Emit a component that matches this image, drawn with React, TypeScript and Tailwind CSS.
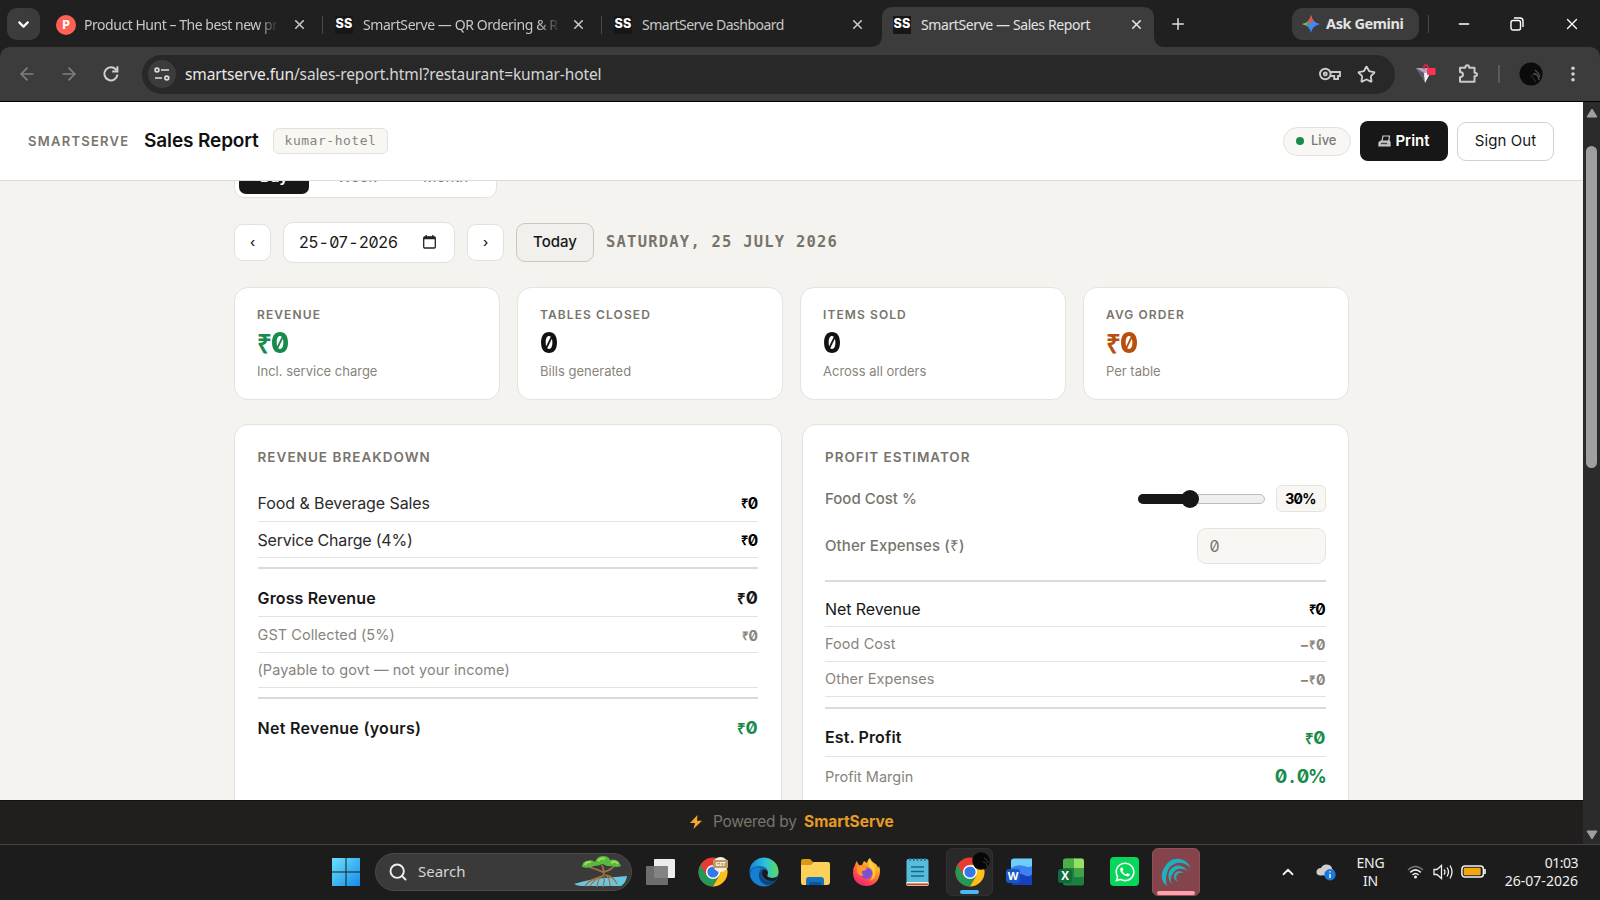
import { FC, ReactNode } from "react";
import { ArrowLeft, ArrowRight, ChevronDown, ChevronUp, Minus, Plus, Search, Star, X } from "lucide-react";
import { FaWhatsapp } from "react-icons/fa";

interface TabProps {
  title: string;
  icon: ReactNode;
  active?: boolean;
  divider?: boolean;
  className: string;
}

interface StatProps {
  label: string;
  sub: string;
  rupee?: boolean;
  color: string;
}

interface RowProps {
  label: string;
  value?: ReactNode;
  className: string;
  valueClass?: string;
  labelClass?: string;
}

const SSIcon = () => (
  <span className="flex h-[18px] w-[18px] shrink-0 items-center justify-center bg-[#171717] font-['Inter'] text-[12.5px] font-extrabold tracking-[0.2px] text-white">SS</span>
);

const Tab: FC<TabProps> = ({ title, icon, active, divider, className }) => (
  <div className={`relative flex h-[39px] w-[279px] shrink-0 items-center pb-[4px] pl-3 ${active ? "text-[#e3e3e3]" : "text-[#c7c7c7]"}`}>
    {active && (
      <svg className="absolute -left-[11px] top-0" width="294" height="40" viewBox="0 0 294 40" fill="#3c3c3c">
        <path d="M0 40C8 40 12 36 12 28V11C12 4 16 0 23 0H273C280 0 284 4 284 11V28C284 36 288 40 294 40Z" />
      </svg>
    )}
    <div className="relative flex w-[20px] items-center">{icon}</div>
    <div className={`relative ml-2 w-[200px] overflow-hidden whitespace-nowrap text-[14px] ${className}`}>{title}</div>
    <X className="relative ml-[8px] h-[15px] w-[15px] shrink-0" strokeWidth={2.6} />
    {divider && <div className="ml-[15px] h-[18px] w-px bg-[#484848]" />}
  </div>
);

// Slashed zero with an optional currency sign in front
const Amount: FC<{ minus?: boolean }> = ({ minus }) => (
  <span className="inline-flex items-center leading-none">
    {minus && <span className="font-bold">−</span>}
    <span className="-mr-[0.5px] font-['Open_Sans'] text-[0.83em] font-semibold">₹</span>
    <span className="font-bold">0</span>
  </span>
);

const StatCard: FC<StatProps> = ({ label, sub, rupee, color }) => (
  <div className="h-[113px] rounded-[14px] border border-[#e5e3dd] bg-white px-[22px] pt-[18px]">
    <div className="text-[12px] font-semibold leading-[18px] tracking-[1.1px] text-[#78746c]">{label}</div>
    <div className={`flex h-[37px] items-center text-[29px] font-extrabold leading-none ${color}`}>
      {rupee && <span className="-mr-px font-['Open_Sans'] text-[26px] font-bold">₹</span>}
      <span className="inline-block origin-left scale-x-90">0</span>
    </div>
    <div className="text-[13px] leading-[20px] text-[#88847c]">{sub}</div>
  </div>
);

const Row: FC<RowProps> = ({ label, value, className, valueClass = "text-[15px]", labelClass = "" }) => (
  <div className={`flex items-center justify-between border-[#e3e2dd] ${className}`}>
    <span className={labelClass}>{label}</span>
    <span className={valueClass}>{value}</span>
  </div>
);

const Chrome = () => (
  <svg width="30" height="30" viewBox="0 0 30 30">
    <circle cx="15" cy="15" r="14.5" fill="#e83b32" />
    <path d="M2.4 7.8A14.5 14.5 0 0 0 15 29.5L21.2 18.6 15 21.5 8.8 18.8Z" fill="#229954" />
    <path d="M15 29.5A14.5 14.5 0 0 0 27.6 7.8H15L21.5 18.4Z" fill="#fbc116" />
    <circle cx="15" cy="15" r="7.1" fill="#fff" />
    <circle cx="15" cy="15" r="5.6" fill="#3578e8" />
  </svg>
);

const Edge = () => (
  <svg width="30" height="30" viewBox="0 0 30 30">
    <defs>
      <linearGradient id="edgeTop" x1="0" x2="1"><stop stopColor="#1683d8" /><stop offset=".55" stopColor="#2cc4d8" /><stop offset="1" stopColor="#61d957" /></linearGradient>
    </defs>
    <circle cx="15" cy="15" r="14.5" fill="#1469b8" />
    <path d="M.6 14A14.5 14.5 0 0 1 29.5 14C30 20 25 22 20 20.5C17 19.6 18.5 18 19 16C19.5 11 14 8.5 9.5 9C5 9.4 2 11 .6 14Z" fill="url(#edgeTop)" />
    <path d="M10 16C9 22 13 27 19 28.5C13 31 4 27 1.5 20C1 12 7 9 11 11Z" fill="#1580d2" />
    <path d="M13.5 13C10.5 17 13 24 21 24C25 24 27 22 28.2 20.8C25 29 14 31 10.6 22C9 17 11 13 13.5 13Z" fill="#104584" />
    <path d="M13.6 13C17 11.4 20 14.6 18.5 17.5C17.3 19.5 20 21 23.5 21C26 21 28 20 28.5 19.5L27 23C20 26 10 21 13.6 13Z" fill="#1b1b1b" />
  </svg>
);

const Folder = () => (
  <svg width="30" height="28" viewBox="0 0 30 28">
    <path d="M1 3Q1 1 3 1H10L13 4H26V12H1Z" fill="#d99a13" />
    <path d="M1 7H11L14 4H28Q30 4 30 6V24Q30 27 27 27H3Q1 27 1 24Z" fill="#fcd15a" />
    <path d="M6 27V22Q6 19 9 19H21Q24 19 24 22V27Z" fill="#1273c4" />
    <path d="M9 24H21V27H9Z" fill="#0b5798" />
  </svg>
);

const Firefox = () => (
  <svg width="29" height="30" viewBox="0 0 29 30">
    <defs>
      <linearGradient id="fox" x1=".8" y1="0" x2=".2" y2="1"><stop stopColor="#ffe243" /><stop offset=".4" stopColor="#ff9226" /><stop offset=".7" stopColor="#ff4950" /><stop offset="1" stopColor="#e91d7c" /></linearGradient>
    </defs>
    <path d="M3 8L4.5 4L7 8L10 8L12 4L15 6Q15 3 18 1Q19 4 22 6Q25 7 26 11L27 9Q29 14 27 20C25 26 20 29 14.5 29C7 29 1 24 1 16Q1 11 3 8Z" fill="url(#fox)" />
    <circle cx="14.5" cy="16.2" r="5.7" fill="#7950d7" />
    <path d="M5 10Q9 9 12 10L15 11Q14 14 10 14Q9 17 12 18Q7 20 5 15Z" fill="#ff9a26" />
    <path d="M17 4Q21 6 23 12Q25 21 18 24Q25 14 17 10Z" fill="#ffd33b" />
  </svg>
);

const Notepad = () => (
  <svg width="23" height="30" viewBox="0 0 23 30">
    <rect x=".5" y="2" width="22" height="27" rx="2" fill="#58bddb" />
    <path d="M.5 25H22.5V27.5Q22.5 29 21 29H2Q.5 29 .5 27.5Z" fill="#f3f3f3" />
    <path d="M1 27.4H22" stroke="#c44c26" strokeWidth="2" />
    <path d="M4 1V4M7.8 1V4M11.5 1V4M15.2 1V4M19 1V4" stroke="#21708f" strokeWidth="1.5" />
    <path d="M5 10H18M5 14.5H18M5 19H18" stroke="#136988" strokeWidth="1.6" />
  </svg>
);

const Word = () => (
  <svg width="27" height="28" viewBox="0 0 27 28">
    <path d="M5 3Q5 .5 8 .5H26V10H5Z" fill="#6fcdf9" />
    <path d="M5 10Q12 6 18 8T26 8V19H5Z" fill="#3b82ee" />
    <path d="M5 18Q12 14 18 17T26 16V27H8Q5 27 5 24Z" fill="#1740bd" />
    <rect x="0" y="11" width="14" height="14" rx="3" fill="#1858c3" />
    <text x="7" y="22" textAnchor="middle" fontSize="11" fontWeight="700" fontFamily="Open Sans" fill="#fff">W</text>
  </svg>
);

const Excel = () => (
  <svg width="27" height="28" viewBox="0 0 27 28">
    <rect x="5" y=".5" width="21" height="27" rx="2.5" fill="#198041" />
    <path d="M5 3Q5 .5 8 .5H17V10H5Z" fill="#4caf45" />
    <path d="M16 .5H24Q26 .5 26 3V10H16Z" fill="#97dd66" />
    <path d="M16 10H26V19H16Z" fill="#43a344" />
    <rect x="0" y="11" width="14" height="14" rx="3" fill="#0f6b38" />
    <text x="7" y="22" textAnchor="middle" fontSize="11.5" fontWeight="700" fontFamily="Open Sans" fill="#fff">X</text>
  </svg>
);

const Banyan = () => (
  <svg width="54" height="33" viewBox="0 0 54 33">
    <path d="M0 29Q16 24 30 23L53 21Q52 28 47 31H8Q3 31 0 29Z" fill="#68c7e0" />
    <path d="M29 21Q22 22 16 31M28 21Q24 23 23 32M30 21Q31 26 29 32M31 20Q36 22 36 31M32 20Q40 22 43 29M28 22Q17 23 11 31" fill="none" stroke="#a47145" strokeWidth="1.3" />
    <path d="M29.5 21Q30.5 16 28 10M29 17Q22 14 15 12M30 17Q37 15 40 11" fill="none" stroke="#a47145" strokeWidth="1.8" />
    <path d="M8 12Q8 6 14 6Q18 4 21 7Q23 1 29 1Q35 1 36 5Q44 3 47 11Q43 13 38 11Q33 12 29 9Q24 11 20 11Q14 14 8 12Z" fill="#58b83f" />
    <path d="M11 10Q12 6 17 7M24 6Q27 2 31 4M37 8Q42 5 44 9" fill="none" stroke="#94df5a" strokeWidth="2.2" />
  </svg>
);

const BrowserBar = () => (
  <>
    <div className="flex h-[47px] bg-[#202020] pt-2 font-['Noto_Sans']">
      <div className="ml-[7px] mr-1 flex h-[32px] w-[33px] shrink-0 items-center justify-center rounded-[10px] bg-[#3c3c3c] text-white">
        <ChevronDown className="h-[17px] w-[17px]" strokeWidth={3} />
      </div>
      <div className="-mt-px flex">
        <Tab
          title="Product Hunt – The best new pr"
          className="tracking-[-0.46px] [mask-image:linear-gradient(to_right,#000_175px,transparent_194px)]"
          divider
          icon={<span className="flex h-5 w-5 items-center justify-center rounded-full bg-[#ff6154] text-[13px] font-bold text-white">P</span>}
        />
        <Tab title="SmartServe — QR Ordering & R" className="tracking-[-0.42px] [mask-image:linear-gradient(to_right,#000_175px,transparent_198px)]" divider icon={<SSIcon />} />
        <Tab title="SmartServe Dashboard" className="tracking-[-0.5px]" icon={<SSIcon />} />
        <Tab title="SmartServe — Sales Report" className="tracking-[-0.4px]" active icon={<SSIcon />} />
      </div>
      <Plus className="ml-[9px] mt-[7px] h-[18px] w-[18px] text-[#e0e0e0]" />
      <div className="ml-[105px] flex h-[32px] w-[127px] items-center rounded-[11px] bg-[#3c3c3c] pb-px pl-[10px] text-[14.5px] font-bold tracking-[-0.4px] text-[#e3e3e3]">
        <svg width="18" height="18" viewBox="0 0 18 18" className="mr-[6px]">
          <defs>
            <linearGradient id="gem" x1="0" y1=".3" x2="1" y2=".6"><stop offset=".1" stopColor="#f6c225" /><stop offset=".35" stopColor="#37a575" /><stop offset=".52" stopColor="#4187f5" /></linearGradient>
          </defs>
          <path d="M9 0Q10.5 7.5 18 9Q10.5 10.5 9 18Q7.5 10.5 0 9Q7.5 7.5 9 0Z" fill="url(#gem)" />
          <path d="M9 0Q9.8 4 12.2 6.2L8 8L5.8 6.2Q8.2 4 9 0Z" fill="#e9504e" />
        </svg>
        Ask Gemini
      </div>
      <div className="ml-[9px] mt-[7px] h-[18px] w-px bg-[#484848]" />
      <div className="ml-[27px] flex h-[32px] items-center text-white">
        <Minus className="h-[16px] w-[16px]" strokeWidth={2} />
        <svg width="14" height="14" viewBox="0 0 14 14" className="ml-[38px]" fill="none" stroke="currentColor" strokeWidth="1.4">
          <rect x="1" y="3.5" width="9.5" height="9.5" rx="2" />
          <path d="M4 1H10Q13 1 13 4V10" />
        </svg>
        <X className="ml-[39px] h-[18px] w-[18px]" strokeWidth={1.8} />
      </div>
    </div>
    <div className="h-[55px] bg-[#202020]">
      <div className="flex h-full items-center rounded-t-[10px] border-b border-black bg-[#3c3c3c] font-['Noto_Sans']">
        <ArrowLeft className="ml-[17px] h-[20px] w-[20px] text-[#7f7f7f]" />
        <ArrowRight className="ml-[22px] h-[20px] w-[20px] text-[#7f7f7f]" />
        <svg width="18" height="18" viewBox="0 0 18 18" className="ml-[23px]" fill="none" stroke="#d0d0d0" strokeWidth="2">
          <path d="M14.4 5A6.6 6.6 0 1 0 15.5 9.7M15.4 1.2V6.5H10.2" />
        </svg>
        <div className="ml-[22px] flex h-[39px] w-[1253px] items-center rounded-full bg-[#282828] pl-[6px]">
          <div className="flex h-[28px] w-[28px] items-center justify-center rounded-full bg-[#3c3c3c]">
            <svg width="16" height="14" viewBox="0 0 16 14" fill="none" stroke="#dedede" strokeWidth="1.7">
              <circle cx="3" cy="3" r="1.9" /><path d="M7 3H15M1 11H8" /><circle cx="12.8" cy="11" r="1.9" />
            </svg>
          </div>
          <div className="ml-[9px] pt-px text-[15.5px] tracking-[-0.11px] text-[#d5d5d5]">
            <span className="text-[#e8e8e8]">smartserve.fun</span>/sales-report.html?restaurant=kumar-hotel
          </div>
          <svg width="22" height="14" viewBox="0 0 22 14" className="ml-auto" fill="none" stroke="#c9c9c9" strokeWidth="1.9">
            <circle cx="6.3" cy="7" r="5.3" /><circle cx="6.3" cy="7" r="1.5" />
            <path d="M11 5H21V9H19V12H15.2V9H11" />
          </svg>
          <Star className="ml-[16px] mr-[19px] h-[19px] w-[19px] text-[#d0d0d0]" strokeWidth={2.3} />
        </div>
        <svg width="22" height="22" viewBox="0 0 22 22" className="ml-[20px]">
          <path d="M1 5H15L10 19Z" fill="#a9a7b8" /><path d="M1 5L9 10 10 19Z" fill="#5d5870" /><path d="M9 10L16 9 10 20Z" fill="#eeeef3" />
          <path d="M9 6V4Q9 2 11 2T13 5" fill="none" stroke="#ef2347" strokeWidth="1.7" /><rect x="12" y="5" width="8.5" height="7" rx="1" fill="#ff3154" />
        </svg>
        <svg width="21" height="21" viewBox="0 0 21 21" className="ml-[21px]" fill="none" stroke="#c9c9c9" strokeWidth="2">
          <path d="M2 3.8H7.3Q7.3 1.3 9.3 1.3T11.3 3.8H16.5V8.7Q19 8.7 19 10.5T16.5 12.3V17.8H2V13.3Q5 12.9 5 10.6T2 8Z" strokeLinejoin="round" />
        </svg>
        <div className="ml-[19px] h-[18px] w-[2px] bg-[#5a5a5a]" />
        <svg width="24" height="24" viewBox="0 0 24 24" className="ml-[19px]">
          <circle cx="12" cy="12" r="11.5" fill="#0b0b0b" /><path d="M14 12Q19 11 20 18M16 8Q20 11 21 15" stroke="#4b4b4b" fill="none" strokeWidth="1.5" /><path d="M12 13L17 20" stroke="#333" />
        </svg>
        <svg width="4" height="16" viewBox="0 0 4 16" className="ml-[28px]" fill="#d0d0d0"><circle cx="2" cy="2.2" r="1.8" /><circle cx="2" cy="8" r="1.8" /><circle cx="2" cy="13.8" r="1.8" /></svg>
      </div>
    </div>
  </>
);

const Header = () => (
  <header className="flex h-[79px] shrink-0 items-center border-b border-[#dddbd5] bg-white pl-7 pr-[29px]">
    <div className="w-[116px] pt-px text-[13px] font-semibold tracking-[1.25px] text-[#78746c]">SMARTSERVE</div>
    <h1 className="w-[129px] whitespace-nowrap pt-px text-[19px] font-semibold tracking-[-0.12px] text-[#111]">Sales Report</h1>
    <div className="flex h-[26px] w-[115px] items-center justify-center rounded-[6px] border border-[#e3e1db] bg-[#f8f7f4] font-['DejaVu_Sans_Mono'] text-[13px] tracking-[0.52px] text-[#88847c]">kumar-hotel</div>
    <div className="ml-auto flex h-[29px] w-[68px] items-center rounded-full border border-[#e3e1db] bg-[#f8f7f4] pl-3 text-[13px] font-medium text-[#7c7870]">
      <span className="mr-[7px] h-2 w-2 rounded-full bg-[#188a4b]" />
      Live
    </div>
    <button className="ml-[9px] flex h-[40px] w-[88px] items-center justify-center rounded-[8px] bg-[#171717] text-[15px] font-semibold text-white">
      <svg width="13" height="12" viewBox="0 0 13 12" className="mr-[4px]" fill="none" stroke="#d2d2d2" strokeWidth="1.2">
        <path d="M4 6L5 1H11.5L10.7 6" /><path d="M1 10V7.5L3 6H11.5L12 7.5V11H1Z" fill="#b5b5b5" /><path d="M3 8.5H9" stroke="#444" />
      </svg>
      Print
    </button>
    <button className="ml-[9px] h-[39px] w-[97px] rounded-[9px] border border-[#d3d1ca] bg-white text-[15px] tracking-[0.1px] text-[#171717]">Sign Out</button>
  </header>
);

const DateRow = () => (
  <div className="flex h-[41px] items-center">
    <button className="h-[37px] w-[37px] rounded-[9px] border border-[#e3e1db] bg-white text-[13px] font-medium">‹</button>
    <div className="ml-3 flex h-[41px] w-[172px] items-center rounded-[10px] border border-[#e3e1db] bg-white pb-px pl-[15px]">
      <span className="w-[124px] text-[16px] tracking-[-0.2px]">
        25<span className="mx-[2px]">-</span>07<span className="mx-[2px]">-</span>2026
      </span>
      <svg width="13" height="14" viewBox="0 0 13 14" fill="none" stroke="#222" strokeWidth="1.3">
        <rect x=".7" y="2" width="11.6" height="11" rx="1" /><path d="M1 3H12" strokeWidth="2.5" /><path d="M3.2 0V3M9.8 0V3" />
      </svg>
    </div>
    <button className="ml-3 h-[37px] w-[37px] rounded-[9px] border border-[#e3e1db] bg-white text-[13px] font-medium">›</button>
    <button className="ml-3 h-[39px] w-[78px] rounded-[9px] border border-[#c9c7c0] bg-[#f1f0ec] text-[15px] font-medium">Today</button>
    <div className="ml-3 whitespace-pre font-['DejaVu_Sans_Mono'] text-[15.5px] font-bold tracking-[1.22px] text-[#78746c]">SATURDAY, 25 JULY 2026</div>
  </div>
);

const muted = "border-b text-[14.5px] tracking-[0.06px] text-[#88847c]";

const RevenuePanel = () => (
  <section className="h-[400px] rounded-t-[14px] border border-[#e5e3dd] bg-white px-[22.5px] pt-[22px]">
    <h2 className="h-[38px] text-[13.5px] font-semibold leading-[20px] tracking-[1.03px] text-[#78746c]">REVENUE BREAKDOWN</h2>
    <Row label="Food & Beverage Sales" value={<Amount />} className="h-[37px] border-b text-[16px] tracking-[-0.08px] text-[#2b2b2b]" valueClass="text-[15.5px] text-black" />
    <Row label="Service Charge (4%)" value={<Amount />} className="h-[36px] border-b text-[16px] tracking-[-0.2px] text-[#2b2b2b]" valueClass="text-[15.5px] text-black" />
    <div className="mt-[9px] h-[2px] bg-[#dcdbd4]" />
    <Row label="Gross Revenue" value={<Amount />} className="h-[48px] border-b pt-[10px] text-[16px] font-semibold tracking-[0.15px]" valueClass="text-[18px]" />
    <Row label="GST Collected (5%)" value={<Amount />} className={`h-[36px] ${muted}`} valueClass="text-[14px]" />
    <Row label="(Payable to govt — not your income)" className={`h-[35px] ${muted}`} />
    <div className="mt-[9px] h-[2px] bg-[#dcdbd4]" />
    <Row label="Net Revenue (yours)" value={<Amount />} className="h-[48px] pt-[9px] text-[16px] font-semibold tracking-[0.3px]" valueClass="text-[18px] text-[#188a4b]" />
  </section>
);

const ProfitPanel = () => (
  <section className="h-[400px] rounded-t-[14px] border border-[#e5e3dd] bg-white px-[22.5px] pt-[22px]">
    <h2 className="h-[38px] text-[13.5px] font-semibold leading-[20px] tracking-[0.95px] text-[#78746c]">PROFIT ESTIMATOR</h2>
    <div className="flex h-[27px] items-center text-[15px] font-medium text-[#78746c]">
      <span className="pt-px">Food Cost %</span>
      <div className="relative ml-auto h-[10px] w-[127px] rounded-full border border-[#bcbcbc] bg-[#efefef]">
        <div className="absolute -left-px -top-px h-[10px] w-[50px] rounded-full bg-[#171717]" />
        <div className="absolute -top-[5px] left-[42px] h-[18px] w-[18px] rounded-full bg-[#171717]" />
      </div>
      <div className="ml-[11px] flex h-[27px] w-[50px] items-center justify-center rounded-[6px] border border-[#e5e3dd] bg-[#f8f7f4] text-[14px] font-bold tracking-[-0.8px] text-black">30%</div>
    </div>
    <div className="mt-4 flex h-[36px] items-center justify-between text-[15px] font-medium tracking-[0.1px] text-[#78746c]">
      <span>Other Expenses (<span className="font-['Open_Sans']">₹</span>)</span>
      <div className="flex h-[36px] w-[129px] items-center rounded-[9px] border border-[#e5e3dd] bg-[#f8f7f4] pl-3 text-[16px] font-normal">0</div>
    </div>
    <div className="mt-4 h-[2px] bg-[#dcdbd8]" />
    <Row label="Net Revenue" value={<Amount />} className="h-[45px] border-b pt-[9px] text-[16px] tracking-[-0.08px] text-[#171717]" valueClass="text-[15.5px] text-black" />
    <Row label="Food Cost" value={<Amount minus />} className={`h-[35px] ${muted}`} valueClass="text-[14px]" />
    <Row label="Other Expenses" value={<Amount minus />} className={`h-[35px] ${muted}`} valueClass="text-[14px]" />
    <div className="mt-[10px] h-[2px] bg-[#dcdbd8]" />
    <Row label="Est. Profit" value={<Amount />} className="h-[48px] border-b pt-[9px] text-[16px] font-semibold tracking-[0.12px]" valueClass="text-[18px] text-[#188a4b]" />
    <Row
      label="Profit Margin"
      value={<>0<span className="mx-[3px]">.</span>0%</>}
      className="h-[40px] text-[14.5px] text-[#88847c]"
      valueClass="text-[18.5px] font-bold tracking-[-1.3px] text-[#188a4b]"
    />
  </section>
);

const Taskbar = () => (
  <div className="flex h-[56px] items-center border-t border-[#454545] bg-[#1c1c1c] pb-[2px] font-['Noto_Sans'] text-[#efefef]">
    <svg width="28" height="28" viewBox="0 0 28 28" className="ml-[332px]">
      <defs><linearGradient id="win" x1="0" y1="0" x2="1" y2="1"><stop stopColor="#6be1fc" /><stop offset="1" stopColor="#158ce9" /></linearGradient></defs>
      <path d="M0 0H13.5V13.5H0ZM14.5 0H28V13.5H14.5ZM0 14.5H13.5V28H0ZM14.5 14.5H28V28H14.5Z" fill="url(#win)" />
    </svg>
    <div className="ml-[15px] flex h-[38px] w-[257px] items-center rounded-full border border-[#4a4a4a] bg-[#3a3a3a] pl-3">
      <Search className="h-[20px] w-[20px]" strokeWidth={2.3} />
      <span className="ml-[10px] text-[15px] text-[#d6d6d6]">Search</span>
      <div className="ml-auto mr-[3px]"><Banyan /></div>
    </div>
    <svg width="30" height="28" viewBox="0 0 30 28" className="ml-[14px]">
      <rect x="8" y="1" width="21" height="19" rx="1" fill="#ededed" /><rect x="0" y="8" width="22" height="19" rx="1" fill="#777" fillOpacity=".9" />
    </svg>
    <div className="relative ml-[22px]">
      <Chrome />
      <div className="absolute right-0 top-0 flex h-[15px] w-[15px] items-center justify-center rounded-full bg-[#f4efe6] text-[6px] font-bold text-white"><span className="bg-[#bd9b61] px-[2px] leading-[8px]">GIT</span></div>
    </div>
    <div className="ml-[21px]"><Edge /></div>
    <div className="ml-[21px]"><Folder /></div>
    <div className="ml-[22px]"><Firefox /></div>
    <div className="ml-[25px]"><Notepad /></div>
    <div className="relative ml-[17px] flex h-[48px] w-[47px] items-center justify-center rounded-[6px] border border-[#313131] bg-[#292929]">
      <Chrome />
      <svg width="18" height="18" viewBox="0 0 18 18" className="absolute left-[25px] top-[3px]"><circle cx="9" cy="9" r="8.7" fill="#070707" /><path d="M11 10Q15 10 15 15M12 6Q16 8 16 11" stroke="#3c3c3c" fill="none" /></svg>
      <div className="absolute bottom-[1px] h-[4px] w-[19px] rounded-full bg-[#4cb8f5]" />
    </div>
    <div className="ml-[13px]"><Word /></div>
    <div className="ml-[25px]"><Excel /></div>
    <div className="ml-[25px] flex h-[29px] w-[29px] items-center justify-center rounded-[4px] bg-[#08d65b]"><FaWhatsapp className="h-[22px] w-[22px] text-white" /></div>
    <div className="relative ml-[13px] flex h-[48px] w-[48px] items-center justify-center rounded-[6px] border border-[#915058] bg-[#85434b]">
      <svg width="30" height="30" viewBox="0 0 30 30" fill="#1fb0c0">
        <path d="M6 29Q-3 22 3 11Q9 0 19 2Q26 3 30 11Q23 5 16 6Q8 8 6 16Q4 22 6 29Z" />
        <path d="M11 28Q5 20 9 13Q14 7 20 9Q24 10 27 14Q20 10 15 13Q11 16 10 20Q9 24 11 28Z" />
        <path d="M17 25Q10 21 14 16Q18 12 23 16Q18 15 16 18Q14 21 17 25Z" fill="#38a2aa" />
      </svg>
      <div className="absolute bottom-0 h-[4px] w-[38px] rounded-full bg-[#ff9fab]" />
    </div>
    <ChevronUp className="ml-[79px] h-[18px] w-[18px]" strokeWidth={2.4} />
    <svg width="21" height="18" viewBox="0 0 21 18" className="ml-[19px]">
      <path d="M4 12.5Q0 12 .5 8.5Q1 5 5 5Q7 1 11 1.5Q16 2 16 6Q19 7 18 12Z" fill="#cfcfcf" /><circle cx="14" cy="11.8" r="5.7" fill="#1979d9" /><path d="M14 8.2V9.6M14 11V15" stroke="#fff" strokeWidth="1.4" />
    </svg>
    <div className="ml-[17px] w-[33px] text-center text-[14px] leading-[18px] tracking-[-0.2px]">ENG<br />IN</div>
    <svg width="17" height="14" viewBox="0 0 17 14" className="ml-[20px]" fill="none" stroke="currentColor" strokeWidth="1.5">
      <path d="M1 5Q8.5-2 16 5" stroke="#777" /><path d="M3.2 7.4Q8.5 2.4 13.8 7.4M5.5 10Q8.5 7 11.5 10" /><circle cx="8.5" cy="12" r="1.5" fill="currentColor" stroke="none" />
    </svg>
    <svg width="21" height="16" viewBox="0 0 21 16" className="ml-[9px]" fill="none" stroke="currentColor" strokeWidth="1.3">
      <path d="M1 5.5H4L8.5 1.5V14.5L4 10.5H1ZM11 5.5Q13 8 11 10.5M14 3.5Q17 8 14 12.5M17 1.5Q21 8 17 14.5" />
    </svg>
    <svg width="26" height="13" viewBox="0 0 26 13" className="ml-[7px]">
      <rect x=".9" y=".9" width="21.5" height="11.2" rx="3" fill="none" stroke="#f4f4f4" strokeWidth="1.5" /><rect x="2.7" y="2.7" width="17" height="7.6" rx="1" fill="#f2a50c" /><path d="M24 4V9" stroke="#eee" strokeWidth="1.7" />
    </svg>
    <div className="ml-auto mr-[22px] text-right text-[14px] leading-[18px]">
      <div className="tracking-[-0.5px]">01:03</div>
      <div className="tracking-[0.02px]">26-07-2026</div>
    </div>
  </div>
);

const App: FC = () => {
  return (
    <div className="h-[900px] w-[1600px] overflow-hidden font-['Inter'] text-[#171717]">
      <BrowserBar />
      <div className="flex h-[742px]">
        <div className="flex w-[1583px] flex-col bg-[#f4f3ef] font-['Inter'] [font-feature-settings:'zero']">
          <Header />
          <main className="h-[619px] overflow-hidden pl-[234px]">
            <div className="w-[1115px]">
              <div className="-mt-[29px] flex h-[46px] w-[263px] items-center rounded-[10px] border border-[#e3e1db] bg-white pl-1 text-[15px] text-[#78746c]">
                <span className="flex h-[37px] w-[70px] items-center justify-center rounded-[7px] bg-[#171717] pt-[5px] font-semibold text-white">Day</span>
                <span className="ml-[28px] w-[86px] pt-[5px]">Week</span>
                <span className="pt-[5px]">Month</span>
              </div>
              <div className="mt-6"><DateRow /></div>
              <div className="mt-[24px] grid grid-cols-4 gap-[17px]">
                <StatCard label="REVENUE" sub="Incl. service charge" rupee color="text-[#188a4b]" />
                <StatCard label="TABLES CLOSED" sub="Bills generated" color="text-[#111]" />
                <StatCard label="ITEMS SOLD" sub="Across all orders" color="text-[#111]" />
                <StatCard label="AVG ORDER" sub="Per table" rupee color="text-[#b84f0c]" />
              </div>
              <div className="mt-[24px] grid grid-cols-2 gap-5">
                <RevenuePanel />
                <ProfitPanel />
              </div>
            </div>
          </main>
          <footer className="flex h-[44px] items-center border-t border-[#111] bg-[#201f1d] pb-[2px] pl-[690px] text-[15.5px]">
            <svg width="12" height="14" viewBox="0 0 12 14"><path d="M7.5 0L0 8H5L3.5 14L12 5.8H7Z" fill="#f4a72b" /></svg>
            <span className="ml-[11px] w-[91px] tracking-[-0.3px] text-[#78746c]">Powered by</span>
            <span className="font-bold text-[#e69b26]">SmartServe</span>
          </footer>
        </div>
        <div className="flex w-[17px] flex-col items-center bg-[#2b2b2b]">
          <svg width="12" height="10" viewBox="0 0 12 10" className="mt-[6px]"><path d="M6 1L11 9H1Z" fill="#a0a0a0" stroke="#a0a0a0" strokeLinejoin="round" /></svg>
          <div className="mt-[28px] h-[322px] w-[11px] rounded-full bg-[#9f9f9f]" />
          <svg width="12" height="10" viewBox="0 0 12 10" className="mb-[4px] mt-auto"><path d="M6 9L11 1H1Z" fill="#a0a0a0" stroke="#a0a0a0" strokeLinejoin="round" /></svg>
        </div>
      </div>
      <Taskbar />
    </div>
  );
};

export default App;
